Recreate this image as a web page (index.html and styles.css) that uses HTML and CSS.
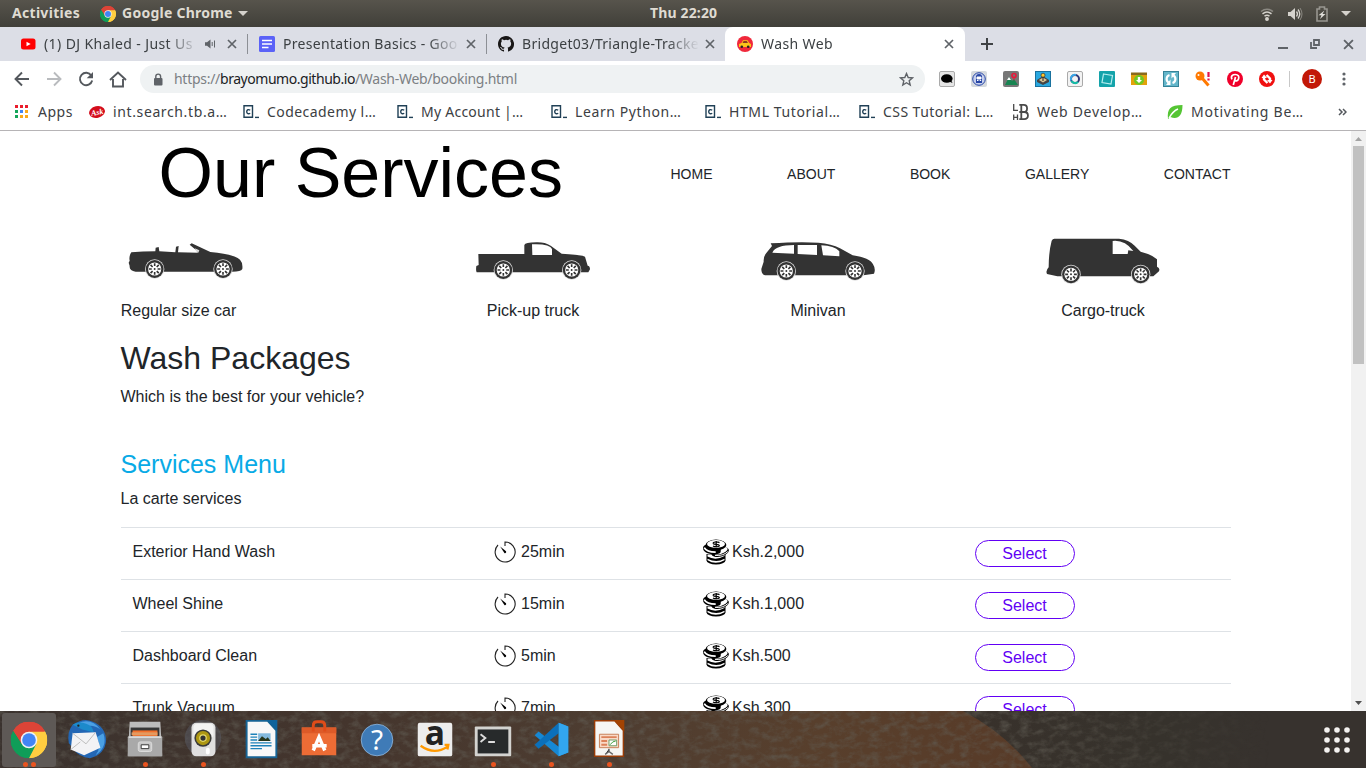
FILE: index.html
```html
<!DOCTYPE html>
<html lang="en">
<head>
<meta charset="utf-8">
<title>Wash Web</title>
<link rel="stylesheet" href="styles.css">
</head>
<body>
<svg class="defs" width="0" height="0">
  <defs>
    <symbol id="chrome" viewBox="0 0 48 48">
      <path d="M24 24 3.2 12A24 24 0 0 1 44.8 12z" fill="#dc4437"/>
      <path d="M24 24 44.8 12A24 24 0 0 1 24 48z" fill="#ffcd40"/>
      <path d="M24 24V48A24 24 0 0 1 3.2 12z" fill="#0f9d58"/>
      <path d="M24 13h21.3A24 24 0 0 0 3.2 12l11.2 17.5z" fill="#dc4437"/>
      <path d="M33.5 29.5 24 48A24 24 0 0 0 45.3 13H24z" fill="#ffcd40"/>
      <path d="M14.4 29.5 3.2 12A24 24 0 0 0 24 48l9.5-18.5z" fill="#0f9d58"/>
      <circle cx="24" cy="24" r="11" fill="#f1f1f1"/><circle cx="24" cy="24" r="9" fill="#4285f4"/>
    </symbol>
    <symbol id="x" viewBox="0 0 10 10"><path d="m1 1 8 8M9 1 1 9" stroke="#5f6368" stroke-width="1.7"/></symbol>
    <symbol id="cc" viewBox="0 0 16 16"><path d="M1 1.7h8.5v11.6H1z" fill="#fff" stroke="#204056" stroke-width="1.4"/><path d="M7.2 6.2C5.600 5 3.700 5.700 3.700 7.700s1.900 2.700 3.500 1.500" fill="none" stroke="#204056" stroke-width="1.400"/><path d="M12 13.400h4" stroke="#204056" stroke-width="1.400"/></symbol>
    <symbol id="wheel" viewBox="-32 -32 64 64">
      <circle r="30" fill="#ddd"/><circle r="27.500" fill="#333"/><circle r="20.500" fill="#fff"/>
      <path d="M0-18V18M-18 0H18M-12.700-12.700 12.700 12.700M12.700-12.700-12.700 12.700" stroke="#333" stroke-width="5" stroke-dasharray="9 18 9"/>
      <circle r="3" fill="#333"/>
    </symbol>
    <symbol id="timer" viewBox="0 0 22 22"><path d="M11 5V1a10 10 0 1 1-7 3" fill="none" stroke="#222" stroke-width="1.100"/><path d="m6.200 5.600 5.800 4.700a1.200 1.200 0 0 1-1.600 1.700z" fill="#000"/></symbol>
    <symbol id="coins" viewBox="0 0 26 26">
      <path d="M3.500 15v6.500a9.400 4 0 0 0 19 0V15z"/>
      <path d="M4.500 21.300q8 5 17 0v-1.500q-8 4.500-17 0z" fill="#fff"/>
      <path d="M4.500 15.500v2q8 4.500 17-.500v-2z" fill="#fff"/>
      <ellipse cx="17" cy="12.800" rx="9" ry="4.900" transform="rotate(-14 17 12.800)"/>
      <ellipse cx="17" cy="11.500" rx="7.800" ry="3.500" transform="rotate(-14 17 11.500)" fill="#fff"/>
      <path d="M12 16.400q8 .8 12.800-3.800" fill="none" stroke="#fff" stroke-width="1"/>
      <path d="M0 9C0 4 10 4 18 8.500 17 12 20 15 12 15.300 4 15.300 0 12.500 0 9z"/>
      <path d="M1.200 8.600q2.500 4.600 11.500 4.600" fill="none" stroke="#fff" stroke-width="1.800"/>
      <ellipse cx="13" cy="5.900" rx="10.400" ry="5.300"/>
      <ellipse cx="13" cy="5" rx="9" ry="3.900" fill="#fff"/>
      <path d="M16.500 3.600C14 2.300 9.500 3 10.300 4.600c.700 1.300 5.600.300 6 1.700.400 1.600-4 2-6.300.700M13.200 2v6" fill="none" stroke="#000" stroke-width="1.200"/>
    </symbol>
  </defs>
</svg>

<header class="panel">
  <span class="activities">Activities</span>
  <svg class="app-logo" width="16" height="16"><use href="#chrome"/></svg>
  <span class="app-name">Google Chrome</span>
  <svg width="10" height="6"><path d="M0 0h10L5 5z" fill="#d5d2cc"/></svg>
  <span class="clock">Thu 22:20</span>
  <div class="indicators">
    <svg width="14" height="14" viewBox="0 0 14 14" fill="none" stroke="#d5d2cc" stroke-width="1.500"><path d="M1 4.500q6-4.500 12 0" opacity=".45"/><path d="M2.500 6.800q4.500-3.400 9 0M4.500 9.200q2.500-1.800 5 0"/><circle cx="7" cy="12" r="1.200" fill="#d5d2cc"/></svg>
    <svg width="16" height="14" viewBox="0 0 16 14"><path d="M1 5h2.500L8 1v12L3.500 9H1z" fill="#d5d2cc"/><path d="M9.500 4.500q2 2.500 0 5M11 2.500q3.500 4.500 0 9" fill="none" stroke="#d5d2cc" stroke-width="1.300"/><path d="M13 1q4 6 0 12" fill="none" stroke="#8a8881"/></svg>
    <svg width="12" height="16" viewBox="0 0 12 16"><path d="M1 3h2.500V1h5v2H11v12H1z" fill="none" stroke="#989690" stroke-width="1.600"/><path d="m8.500 4.500-6 4.700h3L4 13l5.500-5h-3z" fill="#e1dfda"/></svg>
    <svg width="10" height="6"><path d="M0 0h10L5 5z" fill="#d5d2cc"/></svg>
  </div>
</header>

<nav class="tabs">
  <div class="tab">
    <svg width="16" height="16" viewBox="0 0 16 16"><rect x="1" y="2.500" width="14.500" height="11" rx="2.500" fill="#f00"/><path d="m6.500 5.700 4.200 2.300-4.200 2.300z" fill="#fff"/></svg>
    <span class="tab-title t1">(1) DJ Khaled - Just Us</span>
    <svg class="speaker" width="12" height="10" viewBox="0 0 12 10"><path d="M0 3.300h2L5.500.500v9L2 6.700H0z" fill="#5f6368"/><path d="M7.200 3v4M9.500 1.500v7" stroke="#5f6368"/></svg>
    <svg class="close" width="10" height="10"><use href="#x"/></svg>
  </div>
  <div class="tab divided">
    <svg width="16" height="16"><rect width="16" height="16" rx="1.500" fill="#5b62f7"/><path d="M3 4.500h10M3 8h10M3 11.500h6.500" stroke="#fff" stroke-width="1.600"/></svg>
    <span class="tab-title t2">Presentation Basics - Goo</span>
    <svg class="close" width="10" height="10"><use href="#x"/></svg>
  </div>
  <div class="tab divided">
    <svg width="16" height="16" viewBox="0 0 16 16"><path fill="#191717" d="M8 0C3.580 0 0 3.580 0 8c0 3.540 2.290 6.530 5.470 7.590.4.070.55-.17.55-.38v-1.490c-2.010.37-2.530-.49-2.690-.94-.09-.23-.48-.94-.82-1.130-.28-.15-.68-.52-.01-.53.63-.01 1.080.58 1.230.82.72 1.210 1.870.87 2.330.66.070-.52.280-.87.510-1.070-1.780-.2-3.640-.89-3.640-3.950 0-.87.310-1.590.82-2.150-.08-.2-.36-1.020.08-2.120 0 0 .67-.21 2.200.82a7.600 7.600 0 0 1 4 0c1.530-1.040 2.200-.82 2.200-.82.440 1.100.160 1.920.080 2.120.510.56.820 1.270.820 2.150 0 3.070-1.870 3.750-3.650 3.950.290.25.540.73.540 1.480v2.200c0 .21.150.46.550.38A8 8 0 0 0 8 0z"/></svg>
    <span class="tab-title t3">Bridget03/Triangle-Tracke</span>
    <svg class="close" width="10" height="10"><use href="#x"/></svg>
  </div>
  <div class="tab active">
    <svg width="16" height="16" viewBox="0 0 16 16"><circle cx="8" cy="8" r="8" fill="#f0283b"/><path d="M2 11V8l2.500-1L6 4.300h4.500l1.700 2.700L14 8v3z" fill="#fcc419"/><path d="M5.500 7 6.600 5h3.200l1.200 2z" fill="#8a3b22"/><circle cx="4.800" cy="10.800" r="1.300" fill="#222"/><circle cx="11.200" cy="10.800" r="1.300" fill="#222"/></svg>
    <span class="tab-title t4">Wash Web</span>
    <svg class="close" width="10" height="10"><use href="#x"/></svg>
  </div>
  <svg class="new-tab" width="12" height="12"><path d="M6 0v12M0 6h12" stroke="#3f4245" stroke-width="2"/></svg>
  <div class="window-buttons">
    <svg width="10" height="12"><path d="M0 10h10" stroke="#5f6368" stroke-width="2"/></svg>
    <svg width="10" height="12" viewBox="0 0 10 12"><path d="M4 2h5v5H4zM1 4v6h6" fill="none" stroke="#5f6368" stroke-width="1.800"/></svg>
    <svg width="11" height="11"><use href="#x"/></svg>
  </div>
</nav>

<div class="toolbar">
  <svg width="16" height="16" viewBox="0 0 16 16" fill="none" stroke="#54585d" stroke-width="1.900"><path d="M15 8H2M8 1.500 1.500 8 8 14.500"/></svg>
  <svg width="16" height="16" viewBox="0 0 16 16" fill="none" stroke="#b9bbbe" stroke-width="1.900"><path d="M1 8h13M8 1.500 14.500 8 8 14.500"/></svg>
  <svg width="16" height="16" viewBox="0 0 16 16"><path d="M13.300 4.500A6.200 6.200 0 1 0 14.200 9.500" fill="none" stroke="#54585d" stroke-width="1.900"/><path d="M15 1v6.300H8.700z" fill="#54585d"/></svg>
  <svg width="18" height="17" viewBox="0 0 18 17"><path d="M4 8v7.500h10V8M1 9l8-7.500L17 9" fill="none" stroke="#54585d" stroke-width="1.900"/></svg>
  <div class="omnibox">
    <svg width="10" height="13" viewBox="0 0 10 13"><rect x="1" y="5" width="8.500" height="7.500" rx="1" fill="#5f6368"/><path d="M2.800 5.500V3.500a2.400 2.400 0 0 1 4.800 0v2" fill="none" stroke="#5f6368" stroke-width="1.400"/></svg>
    <span class="url"><span>https://</span><span class="host">brayomumo.github.io</span><span>/Wash-Web/booking.html</span></span>
    <svg width="15" height="15" viewBox="0 0 15 15"><path d="m7.500 1.500 1.700 4 4.300.4-3.300 2.900 1 4.200-3.700-2.300L3.800 13l1-4.200L1.500 5.900l4.300-.4z" fill="none" stroke="#5f6368" stroke-width="1.400"/></svg>
  </div>
  <div class="extensions">
    <svg viewBox="0 0 16 16"><rect x=".5" y=".5" width="15" height="15" rx="1.500" fill="#e5e5e5" stroke="#aaa"/><ellipse cx="7.800" cy="7.500" rx="5.800" ry="4.300"/><path d="m9 10 4.500 2-2-4z"/></svg>
    <svg viewBox="0 0 16 16"><rect width="16" height="16" rx="2" fill="#d6dade"/><circle cx="8" cy="8" r="6.300" fill="#c6cfec" stroke="#2746a6"/><path d="M5 12V6q0-3 3-3t3 3v6z" fill="#2746a6"/><path d="M6 6h4v2H6zM6 9.500h1.500M8.700 9.500h1.500" stroke="#fff" fill="#fff"/></svg>
    <svg viewBox="0 0 16 16"><rect width="16" height="16" rx="2" fill="#777"/><path d="m2 14 4-8 3 4 2-2 4 6z" fill="#178451"/><path d="m4 9 2-3 2 3z" fill="#fff"/><circle cx="11" cy="4.500" r="2" fill="none" stroke="#e51c3c" stroke-width="1.700"/><path d="m10 6 1 4 1-4z" fill="#e51c3c"/></svg>
    <svg viewBox="0 0 16 16"><rect x=".5" y=".5" width="15" height="15" fill="#29a8e0" stroke="#19719e"/><path d="m2 9 6-4 6 4v2l-6 3-6-3z" fill="#444"/><path d="m4 9 4-2.500L12 9l-4 2.500z" fill="#ddc797"/><circle cx="8" cy="4.200" r="2" fill="#ffc629" stroke="#333" stroke-width=".7"/><path d="M8 6v4" stroke="#222"/></svg>
    <svg viewBox="0 0 16 16"><rect x=".5" y=".5" width="15" height="15" rx="1.500" fill="#f3f3f3" stroke="#aaa"/><circle cx="8" cy="8" r="4" fill="none" stroke="#2e3676" stroke-width="2"/><path d="M4.200 9.500A4 4 0 0 1 9 4" fill="none" stroke="#3aa8e8" stroke-width="2"/><path d="M4.500 10A4 4 0 0 0 11 10.800" fill="none" stroke="#13bea7" stroke-width="2"/></svg>
    <svg viewBox="0 0 16 16"><rect width="16" height="16" rx="1" fill="#14a3aa"/><path d="m4.500 3 9 1.500-1.500 8.500-9-1.500z" fill="none" stroke="#b5edef" stroke-width="1.200"/></svg>
    <svg viewBox="0 0 16 16"><path d="M0 2h16v12H0z" fill="#e3a20c"/><path d="M0 1.500h16V4H0z" fill="#8a6a1b"/><circle cx="8" cy="9" r="5" fill="#70c923"/><path d="M6.800 6h2.400v3H11l-3 3-3-3h1.800z" fill="#fff"/></svg>
    <svg viewBox="0 0 16 16"><rect x=".5" y=".5" width="15" height="15" fill="#64b6ca" stroke="#358398"/><path d="M6.500 4A4.200 4.200 0 0 0 5.500 11.500M9.500 12A4.200 4.200 0 0 0 10.500 4.500" fill="none" stroke="#fff" stroke-width="2.200"/><path d="M7.500 8.500V14H3zM8.500 7.500V2H13z" fill="#fff"/></svg>
    <svg viewBox="0 0 16 16"><circle cx="5" cy="5" r="4.500" fill="#ff7900"/><path d="m7 7 6.500 7.500" stroke="#ff7900" stroke-width="3"/><circle cx="3.500" cy="4" r="1" fill="#fff"/><path d="M13.500 1v5M13.500 7.500v2" stroke="#e3124a" stroke-width="2.200"/></svg>
    <svg viewBox="0 0 16 16"><circle cx="8" cy="8" r="8" fill="#f0002a"/><path d="M5 8.300C3.200 4.800 6 3.500 8.300 3.500c3 0 4 2 3.300 4.200-.7 2.500-3 2.700-3.800 1.300M8.500 6 6.300 14" fill="none" stroke="#fff" stroke-width="1.700"/></svg>
    <svg viewBox="0 0 16 16"><circle cx="8" cy="8" r="8" fill="#f01010"/><path d="M5 6v2.500L8.500 12M11 10V7.500L7.500 4" fill="none" stroke="#fff" stroke-width="2.400" stroke-linejoin="round"/><path d="M2.500 7 5 3.500 8 7zM13.500 9 11 12.500 8 9z" fill="#fff"/></svg>
  </div>
  <span class="toolbar-rule"></span>
  <span class="avatar">B</span>
  <svg class="kebab" width="4" height="14" fill="#5f6368"><circle cx="2" cy="2" r="1.600"/><circle cx="2" cy="7" r="1.600"/><circle cx="2" cy="12" r="1.600"/></svg>
</div>

<div class="bookmarks">
  <div class="bookmark apps"><svg width="14" height="14"><path d="M0 1.500h13" stroke="#ea1d2c" stroke-width="3" stroke-dasharray="3 2"/><path d="M0 6.500h3" stroke="#15a55a" stroke-width="3"/><path d="M5 6.500h3" stroke="#4285f4" stroke-width="3"/><path d="M10 6.500h3M5 11.500h8" stroke="#fba919" stroke-width="3" stroke-dasharray="3 2"/><path d="M0 11.500h3" stroke="#15a55a" stroke-width="3"/></svg><span class="b0">Apps</span></div>
  <div class="bookmark"><svg viewBox="0 0 16 16"><ellipse cx="8" cy="8" rx="8" ry="5.800" transform="rotate(-12 8 8)" fill="#d40d1c"/><text class="ask" x="1.800" y="11" transform="rotate(-10 8 8)">Ask</text></svg><span class="b1">int.search.tb.a…</span></div>
  <div class="bookmark"><svg><use href="#cc"/></svg><span class="b2">Codecademy l…</span></div>
  <div class="bookmark"><svg><use href="#cc"/></svg><span class="b3">My Account |…</span></div>
  <div class="bookmark"><svg><use href="#cc"/></svg><span class="b4">Learn Python…</span></div>
  <div class="bookmark"><svg><use href="#cc"/></svg><span class="b5">HTML Tutorial…</span></div>
  <div class="bookmark"><svg><use href="#cc"/></svg><span class="b6">CSS Tutorial: L…</span></div>
  <div class="bookmark"><svg viewBox="0 0 16 16" fill="none" stroke="#4a4a4a" stroke-width="1.300"><path d="M.700 0v6.300H5M.700 10.500V16M4.500 10.500V16M.700 13.300h3.800"/><path d="M8.300.900V15.100h2.900c5 0 5-7.100 0-7.100H8.300h2.400c4.500 0 4.500-7.100 0-7.100H6.300M6.300 15.100h2M6.300 8h2" stroke-width="1.800"/></svg><span class="b7">Web Develop…</span></div>
  <div class="bookmark"><svg viewBox="0 0 16 16"><path d="M1 15C0 5 3 1 15.500 1 15.500 13 10 15.500 3.500 13z" fill="#55c534"/><path d="M2 14Q6 7 11 5" fill="none" stroke="#fff" stroke-width="1.400"/></svg><span class="b8">Motivating Be…</span></div>
  <svg class="more" width="9" height="8" fill="none" stroke="#54585d" stroke-width="1.500"><path d="m1 1 3 3-3 3M5 1l3 3-3 3"/></svg>
</div>

<div class="viewport">
<main class="page">
  <div class="page-head">
    <h1>Our Services</h1>
    <ul class="menu"><li>HOME</li><li>ABOUT</li><li>BOOK</li><li>GALLERY</li><li>CONTACT</li></ul>
  </div>
  <section class="vehicles">
    <figure class="first">
      <svg viewBox="46 45 360 150" width="120" height="50"><path d="M57 107Q54 94 62 82Q96 79 134 79L135 68 144 66 146 79 194 82 196 65 204 63 202 82 262 83 255 74 237 59 243 55 299 81Q370 87 388 104 397 113 395 132 391 140 365 140H75Q55 138 57 123L54 113z" fill="#333"/><path d="m252 70 14 6-3 7-7-6" fill="#ddd"/><use href="#wheel" x="101" y="101" width="62" height="62"/><use href="#wheel" x="306" y="101" width="62" height="62"/></svg>
      <figcaption>Regular size car</figcaption>
    </figure>
    <figure>
      <svg viewBox="24 45 360 150" width="120" height="50"><path d="M40 87H178V60Q180 52 214 52 239 51 257 62L290 86Q347 89 360 95L368 122Q375 123 375 133L370 142H35Q32 137 34 123L41 120z" fill="#333"/><path d="M201 58Q255 56 261 72V90H202z" fill="#fff"/><use href="#wheel" x="84" y="104" width="62" height="62"/><use href="#wheel" x="289" y="104" width="62" height="62"/></svg>
      <figcaption>Pick-up truck</figcaption>
    </figure>
    <figure>
      <svg viewBox="24 45 360 150" width="120" height="50"><path d="M62 55Q150 49 205 53 245 56 270 70L308 91Q360 99 369 118 378 132 372 146L340 151H45Q34 148 34 132L41 110Q40 94 49 84L66 63z" fill="#333"/><path d="M67 83Q77 60 132 60V86zM143 60 201 60V90L143 87zM214 61Q253 62 268 79V94L219 91z" fill="#fff"/><use href="#wheel" x="78" y="107" width="62" height="62"/><use href="#wheel" x="284" y="107" width="62" height="62"/></svg>
      <figcaption>Minivan</figcaption>
    </figure>
    <figure>
      <svg viewBox="22 38 360 150" width="120" height="50"><path d="M56 40H250Q280 43 297 61L315 79Q350 88 364 102V124Q374 128 370 138L353 153H65L34 146Q29 136 39 126 39 80 48 46 51 40 56 40z" fill="#333"/><path d="M231 47Q267 43 293 77L278 75 276 86H231z" fill="#fff"/><use href="#wheel" x="75" y="116" width="62" height="62"/><use href="#wheel" x="284" y="116" width="62" height="62"/></svg>
      <figcaption>Cargo-truck</figcaption>
    </figure>
  </section>
  <h2>Wash Packages</h2>
  <p>Which is the best for your vehicle?</p>
  <h3>Services Menu</h3>
  <p>La carte services</p>
  <div class="services">
    <div class="row"><span>Exterior Hand Wash</span><span class="time"><svg width="22" height="22"><use href="#timer"/></svg>25min</span><span class="price"><svg width="26" height="26"><use href="#coins"/></svg>Ksh.2,000</span><button>Select</button></div>
    <div class="row"><span>Wheel Shine</span><span class="time"><svg width="22" height="22"><use href="#timer"/></svg>15min</span><span class="price"><svg width="26" height="26"><use href="#coins"/></svg>Ksh.1,000</span><button>Select</button></div>
    <div class="row"><span>Dashboard Clean</span><span class="time"><svg width="22" height="22"><use href="#timer"/></svg>5min</span><span class="price"><svg width="26" height="26"><use href="#coins"/></svg>Ksh.500</span><button>Select</button></div>
    <div class="row"><span>Trunk Vacuum</span><span class="time"><svg width="22" height="22"><use href="#timer"/></svg>7min</span><span class="price"><svg width="26" height="26"><use href="#coins"/></svg>Ksh.300</span><button>Select</button></div>
  </div>
</main>
<aside class="scrollbar">
  <svg width="7" height="4"><path d="M0 4h7L3.500 0z" fill="#a3a3a3"/></svg>
  <div class="thumb"></div>
  <svg width="7" height="4"><path d="M0 0h7L3.500 4z" fill="#505050"/></svg>
</aside>
</div>

<footer class="dock">
  <svg class="wallpaper" width="1366" height="57">
    <defs>
      <linearGradient id="soil"><stop offset="0" stop-color="#3a322e"/><stop offset=".25" stop-color="#44352d"/><stop offset=".45" stop-color="#4e3d31"/><stop offset=".6" stop-color="#583f2c"/><stop offset=".75" stop-color="#583b28"/></linearGradient>
      <linearGradient id="bush"><stop offset="0" stop-color="#38312b"/><stop offset=".5" stop-color="#36322c"/><stop offset=".75" stop-color="#37322e"/></linearGradient>
      <linearGradient id="fade"><stop offset="0" stop-color="#fff"/><stop offset=".75" stop-color="#fff"/><stop offset=".93" stop-color="#000"/></linearGradient>
      <mask id="grain-mask"><rect width="1366" height="57" fill="url(#fade)"/></mask>
      <filter id="grain" x="0" y="0" width="100%" height="100%"><feTurbulence type="fractalNoise" baseFrequency=".1 .16" numOctaves="4" seed="4"/><feColorMatrix values="0 0 0 0 .12  0 0 0 0 .11  0 0 0 0 .09  1.400 0 0 0 -.58"/></filter>
    </defs>
    <rect width="1366" height="57" fill="url(#soil)"/><path d="M963 0Q1005 22 1032 57H1366V0z" fill="url(#bush)"/>
    <g mask="url(#grain-mask)"><rect width="1366" height="57" filter="url(#grain)"/></g>
  </svg>
  <div class="launchers">
    <div class="launcher focused"><svg viewBox="0 0 48 48"><use href="#chrome" x="5" y="5" width="38" height="38"/></svg><i></i><i></i></div>
    <div class="launcher"><svg viewBox="0 0 48 48"><path d="M9 8Q21 0 30 5 43 10 44 24 43 39 27 43 16 42 10 34L5 27Q3 15 9 8z" fill="#2367b5"/><path d="M14 7Q28 0 38 13 28 6 20 12zM41 17q5 14-8 23 7-10 1-19z" fill="#4aa0e4"/><path d="M9 8q6-4 14-1 7 2 8 9l-12-3z" fill="#1c8acb"/><path d="m9 17 24-1 5 16-17 8-14-6z" fill="#f3f3f5"/><path d="m9 17 14 11L33 16M7 34l10-8" fill="none" stroke="#bbb"/><circle cx="15" cy="9" r="1.200" fill="#222"/></svg></div>
    <div class="launcher"><svg viewBox="0 0 48 48"><path d="M8 5h32l2 36H6z" fill="#bcbcbc"/><path d="M9 11h30v10H9z" fill="#363636"/><path d="M11 14h26v7H11z" fill="#f2702b"/><path d="M10 16h27v3H10z" fill="#e39a60"/><rect x="6" y="20" width="36" height="21" rx="1" fill="#a9a9a9"/><path d="M7 21h34" stroke="#d9d9d9" stroke-width="2"/><rect x="17" y="26" width="14" height="10" rx="2" fill="#c8c8c8" stroke="#ddd"/><path d="M20 29h8v4h-8z" fill="#fff" stroke="#333"/></svg><i></i></div>
    <div class="launcher"><svg viewBox="0 0 48 48"><circle cx="24" cy="22" r="19" fill="#67758b" opacity=".3"/><rect x="12" y="6" width="25" height="35" rx="5" fill="#dfdfdf"/><rect x="14" y="7" width="21" height="15" rx="4" fill="#f3f3f3"/><circle cx="24" cy="22" r="9" fill="#3a3a38"/><circle cx="24" cy="22" r="7.400" fill="#ad9712"/><circle cx="24" cy="22" r="4" fill="#e4d96d"/><circle cx="24" cy="22" r="2.700" fill="#333"/><rect x="27" y="32" width="4" height="7" rx="2" fill="#fff"/></svg><i></i></div>
    <div class="launcher"><svg viewBox="0 0 48 48"><path d="M9 4h22l9 10v28H9z" fill="#f8f8f8" stroke="#176394" stroke-width="2"/><path d="M30 3h11v11z" fill="#0e639c"/><path d="M13 18h7M13 21h7M13 24h7M13 27h22M13 30h22M13 33h12" stroke="#1e82b9" stroke-width="1.400"/><path d="M21 17h13v8H21z" fill="#82b9dd"/><path d="m21 25 4-5 4 3 2-2 3 4z" fill="#26361b"/></svg></div>
    <div class="launcher"><svg viewBox="0 0 48 48"><path d="M6 11h36v29H6z" fill="#ed6c35"/><path d="M6 11h36v6H6z" fill="#dd5a28"/><path d="M18 15V9q0-4 4-4h4q4 0 4 4v6" fill="none" stroke="#df4c19" stroke-width="3"/><path d="m18 35 6-14 6 14M17 30h15" fill="none" stroke="#fff" stroke-width="3.600"/></svg></div>
    <div class="launcher"><svg viewBox="0 0 48 48"><circle cx="24" cy="24" r="16.500" fill="#3f7bb7" stroke="#83a9cf"/><text class="help" x="24" y="34.500">?</text></svg></div>
    <div class="launcher"><svg viewBox="0 0 48 48"><rect x="6" y="6" width="36" height="35" rx="2" fill="#ededed"/><text class="amazon" x="24" y="29">a</text><path d="M9 30q14 10 28 1M34 29h4l-1 5" fill="none" stroke="#ff9900" stroke-width="2.300"/></svg></div>
    <div class="launcher"><svg viewBox="0 0 48 48"><rect x="5" y="10" width="38" height="31" rx="1" fill="#d3d3d0"/><rect x="8" y="13" width="32" height="25" fill="#272a2b"/><path d="m11 18 5 4-5 4M19 26h7" fill="none" stroke="#ddd" stroke-width="2"/></svg><i></i></div>
    <div class="launcher"><svg viewBox="0 0 48 48"><path d="M32 6 42 10V37L32 41 7 19l4-4 21 16z" fill="#1688d4"/><path d="M32 6 7 29l4 4 21-16z" fill="#0b70bb"/><path d="m32 6 10 4v27l-10 4z" fill="#32a6ef"/></svg><i></i></div>
    <div class="launcher"><svg viewBox="0 0 48 48"><path d="M9 4h21l9 10v27H9z" fill="#f6f6f4" stroke="#993c07" stroke-width="1.500"/><path d="M29 3h11v12z" fill="#a34303"/><path d="M14 18h20v14H14z" fill="#f9d9c7" stroke="#c77e57"/><path d="M16 21h16M16 25h6M16 29h6" stroke="#dc825b" stroke-width="2"/><path d="M24 24h8v6h-8z" fill="#fff" stroke="#6b9b66"/><path d="m25 29 3-3 3-1" fill="none" stroke="#359b33"/><path d="M24 33v3l-4 3M24 36l4 3" stroke="#666" stroke-width="1.500"/></svg><i></i></div>
  </div>
  <svg class="grid" width="26" height="26" fill="#f4f2f0"><g id="d"><circle cx="3" cy="3" r="2.800"/><circle cx="13" cy="3" r="2.800"/><circle cx="23" cy="3" r="2.800"/></g><use href="#d" y="10"/><use href="#d" y="20"/></svg>
</footer>
</body>
</html>
```
FILE: styles.css
```css
* { box-sizing: border-box; }
body { margin: 0; width: 1366px; height: 768px; overflow: hidden; display: flex; flex-direction: column; background: #fff; color: #212529; font: 16px/24px "Liberation Sans", sans-serif; }
svg { flex: none; display: block; }
.defs { position: absolute; }
.panel, .tabs, .toolbar, .bookmarks { font-family: "Noto Sans", sans-serif; flex: none; white-space: nowrap; }

.panel { height: 27px; display: flex; align-items: center; padding: 0 15px 0 12px; background: linear-gradient(#57544c, #403f39); color: #dfdbd2; font-size: 14px; font-weight: 700; }
.panel span { margin-top: -1px; }
.activities { width: 88px; letter-spacing: .3px; }
.app-logo { margin-right: 6px; }
.app-name { width: 116px; letter-spacing: .25px; }
.clock { margin-left: 402px; letter-spacing: .15px; }
.indicators { margin-left: auto; display: flex; align-items: center; gap: 13px; }

.tabs { height: 34px; display: flex; align-items: center; padding-left: 8px; background: #dcdee6; color: #3c4043; font-size: 14px; }
.tab { width: 239px; height: 34px; display: flex; align-items: center; padding: 0 10px 0 12px; }
.tab-title { flex: 1; min-width: 0; margin: 0 6px 0 8px; -webkit-mask-image: linear-gradient(90deg, #000 calc(100% - 32px), transparent); mask-image: linear-gradient(90deg, #000 calc(100% - 32px), transparent); }
.t1 { letter-spacing: .4px; }
.t2, .t3 { letter-spacing: .3px; }
.t4 { letter-spacing: .4px; }
.speaker { margin-right: 10px; }
.divided { background: linear-gradient(#8c8f95, #8c8f95) 0 7px / 1px 20px no-repeat; }
.active { width: 240px; background: #fff; border-radius: 8px 8px 0 0; padding-right: 11px; }
.new-tab { margin-left: 16px; }
.window-buttons { margin-left: auto; display: flex; align-items: center; gap: 23px; padding-right: 12px; }
.window-buttons svg:first-child { margin-right: -1px; }

.toolbar { height: 36px; display: flex; align-items: center; padding: 0 20px 0 14px; }
.toolbar > svg { margin-right: 16px; }
.toolbar > svg:nth-of-type(3) { margin-right: 15px; }
.toolbar > svg:nth-of-type(4) { margin-right: 13px; }
.omnibox { width: 786px; height: 28px; border-radius: 14px; background: #eff2f3; display: flex; align-items: center; padding: 0 11px 0 13px; }
.url { flex: 1; margin-left: 11px; font-size: 14px; letter-spacing: -.28px; color: #7c8083; }
.host { color: #202124; letter-spacing: -.46px; }
.extensions { display: flex; gap: 16px; margin-left: 14px; }
.extensions svg { width: 16px; height: 16px; }
.toolbar-rule { width: 1px; height: 16px; background: #c8c8c8; margin: 0 12px 0 14px; }
.avatar { width: 20px; height: 20px; border-radius: 50%; background: #c21807; color: #fff; font-size: 11px; line-height: 20px; text-align: center; }
.toolbar > .kebab { margin: 0 0 0 20px; }

.bookmarks { height: 34px; display: flex; align-items: center; padding: 0 19px 4px 15px; border-bottom: 1px solid #b6b4b6; color: #3c4043; font-size: 14px; }
.bookmark { width: 154px; display: flex; align-items: center; gap: 8px; }
.bookmark svg { width: 16px; height: 16px; }
.apps { width: 74px; }
.bookmark.apps svg { width: 14px; height: 14px; }
.apps span { margin-left: 1px; letter-spacing: .5px; }
.b1 { letter-spacing: .62px; }
.b2, .b6 { letter-spacing: .44px; }
.b3 { letter-spacing: .25px; }
.b4, .b5 { letter-spacing: .6px; }
.b7 { letter-spacing: .7px; }
.b8 { letter-spacing: .75px; }
.ask { font: italic bold 8px "Liberation Serif", serif; fill: #fff; }
.more { margin-left: auto; }

.viewport { flex: 1; min-height: 0; display: flex; overflow: hidden; }
.page { flex: 1; min-width: 0; padding: 0 120px 0 120.5px; }
.scrollbar { width: 15px; background: #f1f1f1; display: flex; flex-direction: column; align-items: center; padding: 6px 0; }
.thumb { width: 11px; height: 218px; margin: 5px 0 auto; background: #c1c1c1; }

.page-head { height: 84px; display: flex; justify-content: space-between; align-items: center; padding-left: 38px; }
h1 { margin: 0; font-size: 70px; line-height: 84px; font-weight: 400; color: #000; }
.menu { display: flex; justify-content: space-between; width: 560px; margin: 1px .5px 0 0; padding: 0; list-style: none; font-size: 14px; }

.vehicles { width: 1125px; display: grid; grid-template-columns: 270px 285px 285px 285px; padding-top: 21px; height: 106px; }
figure { width: 120px; margin: 0 auto; text-align: center; white-space: nowrap; }
figure svg { margin-bottom: 9px; margin-top: 4px; }
figure:nth-child(4) svg { margin-top: 1.500px; margin-bottom: 11.500px; }
.vehicles .first { margin: 0; width: 116px; }
.first svg { margin-left: 5px; }
figcaption { height: 24px; line-height: 24px; margin-top: 1px; }

h2 { margin: 18px 0 8px; font-size: 32px; line-height: 38px; font-weight: 400; }
p { margin: 0; }
h3 { margin: 40px 0 7px; font-size: 25px; line-height: 31px; font-weight: 400; color: #09aae6; }
.services { margin-top: 16px; }
.row { height: 52px; display: grid; grid-template-columns: 361px 209px 272px 100px; border-top: 1px solid #dee2e6; padding: 12px 0 0 12px; align-items: start; }
.row .time, .row .price { display: flex; gap: 5px; }
.row .price { gap: 3px; }
.time svg { margin: 1px 0 0 .5px; }
.price svg { margin: -1px 0 0 .5px; }
button { width: 100px; height: 27px; padding: 0; border: 1px solid #6200f5; border-radius: 14px; background: transparent; color: #6200f5; font: 16px/25px "Liberation Sans", sans-serif; }

.dock { position: relative; height: 57px; flex: none; display: flex; align-items: center; justify-content: space-between; padding: 0 16px 0 2px; background: #3b302b; }
.wallpaper { position: absolute; left: 0; top: 0; }
.launchers, .grid { position: relative; }
.launchers { display: flex; gap: 4px; }
.launcher { width: 54px; height: 54px; padding-top: 4px; display: flex; flex-wrap: wrap; justify-content: center; align-content: flex-start; gap: 0 3px; border-radius: 3px; }
.launcher svg { width: 48px; height: 46px; margin: 0 3px; }
.launcher i { width: 5px; height: 5px; border-radius: 50%; background: #e95420; margin-top: -1px; }
.focused { background: #5e5956; }
.help { font: 29px "Noto Sans", sans-serif; fill: #fff; text-anchor: middle; }
.amazon { font: bold 35px "Open Sans", sans-serif; fill: #222; text-anchor: middle; }
```
